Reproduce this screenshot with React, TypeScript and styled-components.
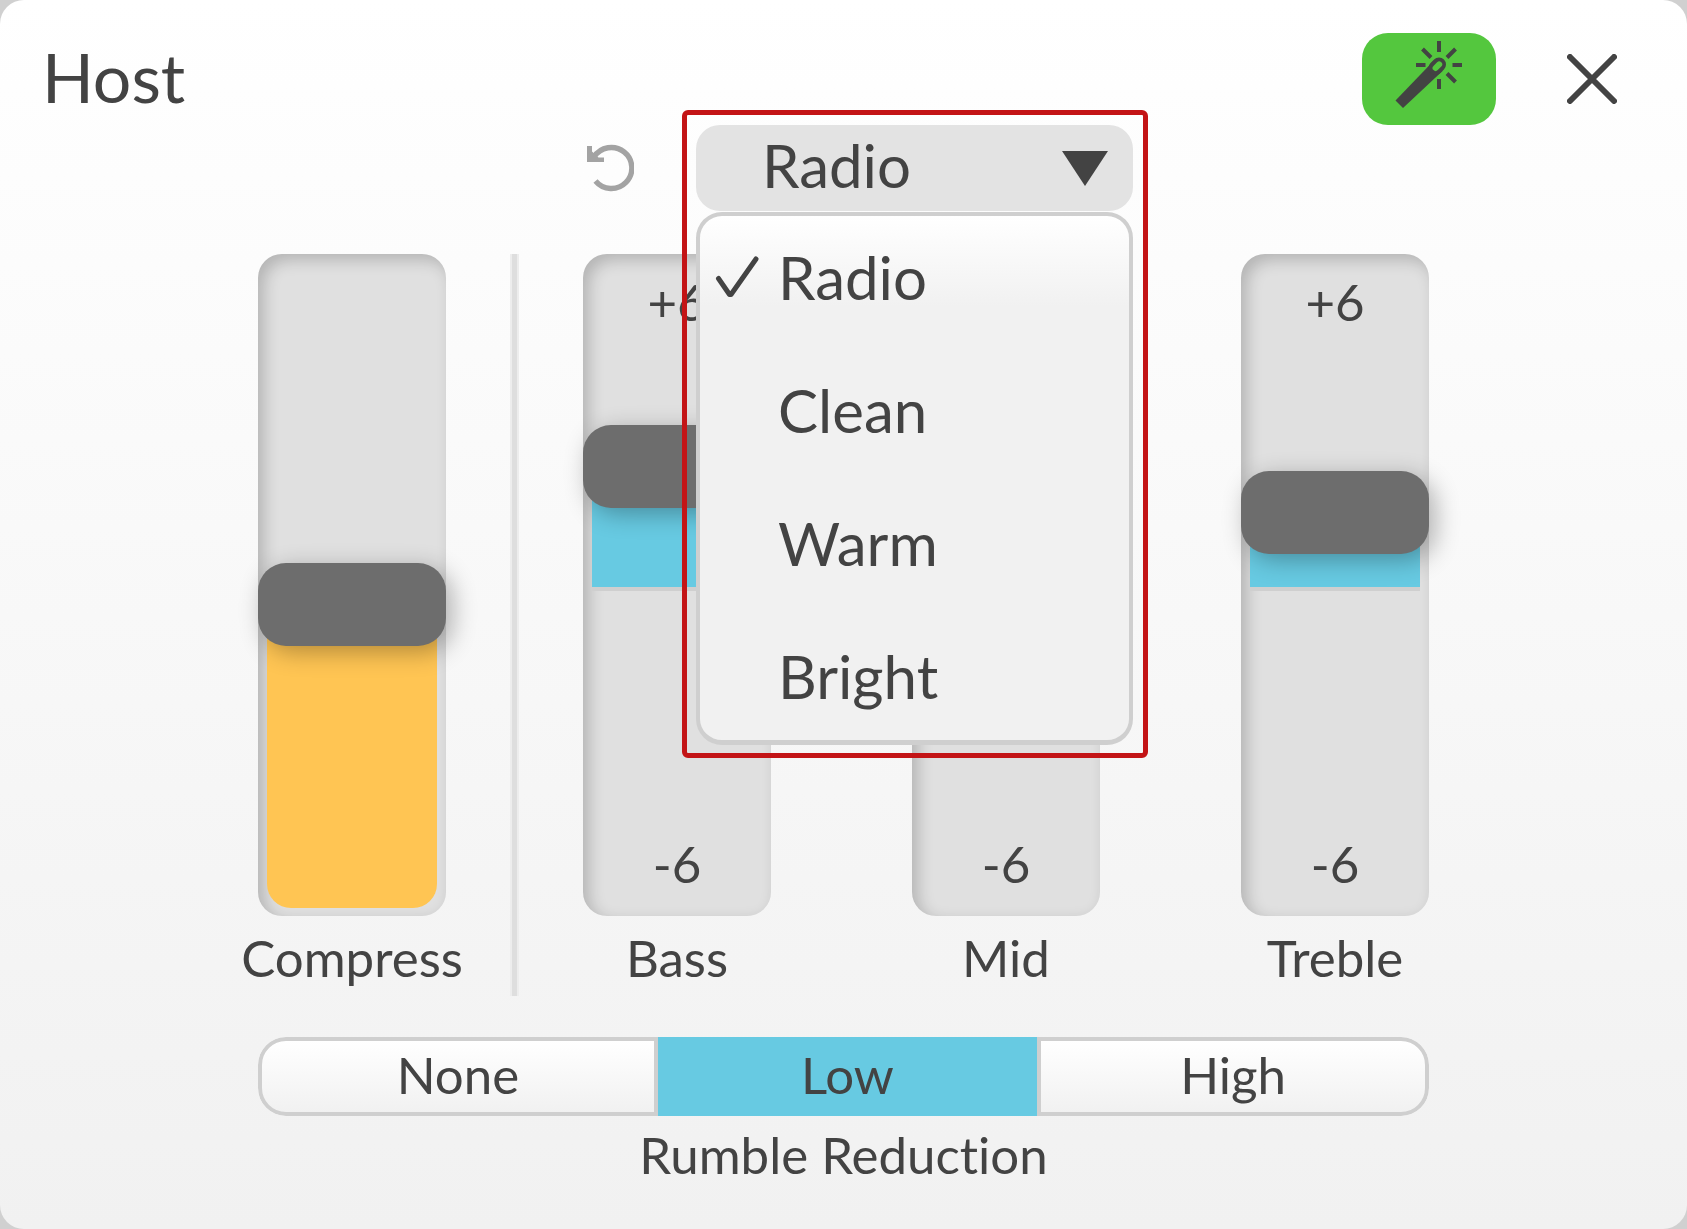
import { useState } from 'react';
import styled, { createGlobalStyle } from 'styled-components';

const ink = '#434343';
const aqua = '#67cae2';
const amber = '#ffc553';
const line = '#cfcfcf';
const TRACK = 662;
const THUMB = 83;

const GlobalStyle = createGlobalStyle`
  *, *::before, *::after { box-sizing: border-box; }
  body {
    margin: 0;
    background: #d0d0d0;
    color: ${ink};
    font-family: Lato, 'Open Sans', 'Liberation Sans', sans-serif;
    font-variant-ligatures: none;
  }
  button, select, input { font: inherit; color: inherit; margin: 0; }
`;

const Panel = styled.main`
  display: flex;
  flex-direction: column;
  min-height: 100vh;
  border-radius: 24px;
  background: linear-gradient(#ffffff, #f1f1f1);
`;

const Header = styled.header`
  display: flex;
  align-items: flex-start;
  padding: 33px 70px 0 42px;
`;

const Title = styled.h1`
  flex: 1;
  margin: 0;
  font-size: 68px;
  line-height: 88px;
  font-weight: 400;
`;

const MagicButton = styled.button`
  width: 134px;
  height: 92px;
  padding: 0;
  border: 0;
  border-radius: 26px;
  background: #54c73e;
  cursor: pointer;

  svg { display: block; }
`;

const PlainButton = styled.button<{ $size: number }>`
  width: ${(p) => p.$size}px;
  height: ${(p) => p.$size}px;
  padding: 0;
  border: 0;
  background: none;
  cursor: pointer;

  svg { display: block; }
`;

const CloseButton = styled(PlainButton)`
  align-self: center;
  margin-left: 71px;
`;

const Body = styled.div`
  display: flex;
  flex-direction: column;
  padding: 0 258px;
`;

const PresetRow = styled.div`
  display: flex;
  align-items: center;
  gap: 62px;
  padding-left: 328px;
`;

const PresetAnchor = styled.div`
  position: relative;
  width: 437px;
  height: 86px;
`;

const Highlight = styled.div`
  position: absolute;
  z-index: 2;
  top: -15px;
  left: -14px;
  right: -15px;
  padding: 10px 10px 8px 9px;
  border: 5px solid #c31416;
  border-radius: 6px;
`;

const SelectBox = styled.label`
  display: grid;
  align-items: center;

  > * { grid-area: 1 / 1; }

  > svg {
    justify-self: end;
    margin-right: 25px;
    pointer-events: none;
  }
`;

const PresetSelect = styled.select`
  appearance: none;
  width: 100%;
  height: 86px;
  padding: 0 80px 6px 66px;
  border: 0;
  border-radius: 24px;
  background: #e3e3e3;
  font-size: 60px;
  cursor: pointer;
`;

const Menu = styled.ul`
  display: flex;
  flex-direction: column;
  gap: 12px;
  margin: 1px 0 0;
  padding: 2px 0;
  list-style: none;
  border: 4px solid ${line};
  border-bottom-width: 5px;
  border-radius: 26px;
  background: linear-gradient(#ffffff, #f1f1f1 90px);
`;

const MenuItem = styled.button`
  display: flex;
  align-items: center;
  gap: 18px;
  width: 100%;
  height: 121px;
  padding: 0 14px 4px;
  border: 0;
  background: none;
  font-size: 60px;
  text-align: left;
  cursor: pointer;
`;

const CheckSlot = styled.span`
  display: flex;
  width: 46px;
`;

const Sliders = styled.section`
  display: flex;
  gap: 64px;
  margin-top: 43px;
`;

const Divider = styled.div`
  width: 9px;
  border: solid #ededed;
  border-width: 0 2px;
  background: #dedede;
`;

const Bands = styled.div`
  display: flex;
  flex: 1;
  justify-content: space-between;
`;

const Channel = styled.label`
  display: flex;
  flex-direction: column;
  align-items: center;
  width: 188px;
`;

const Track = styled.div`
  position: relative;
  display: grid;
  width: 100%;
  height: ${TRACK}px;
  border-radius: 24px;
  background: #e0e0e0;
  box-shadow: inset 6px 6px 16px rgba(0, 0, 0, 0.2);

  > * { grid-area: 1 / 1; }
`;

const Fill = styled.div<{ $color: string; $centered: boolean }>`
  position: absolute;
  left: 9px;
  right: 9px;
  bottom: ${(p) => (p.$centered ? '325px' : '8px')};
  border-bottom: ${(p) => (p.$centered ? `4px solid ${line}` : '0')};
  border-radius: ${(p) => (p.$centered ? '0' : '0 0 24px 24px')};
  background: ${(p) => p.$color};
`;

const Scale = styled.div`
  z-index: 1;
  display: flex;
  flex-direction: column;
  align-items: center;
  justify-content: space-between;
  padding: 18px 0 22px;
  font-size: 51px;
  line-height: 60px;
  pointer-events: none;
`;

const Range = styled.input`
  z-index: 1;
  appearance: none;
  writing-mode: vertical-lr;
  direction: rtl;
  width: 100%;
  height: 100%;
  background: none;
  cursor: pointer;

  &::-webkit-slider-runnable-track {
    width: 100%;
    height: 100%;
    background: none;
  }

  &::-webkit-slider-thumb {
    appearance: none;
    width: 188px;
    height: ${THUMB}px;
    border-radius: 28px;
    background: #6d6d6d;
    box-shadow: 6px 6px 24px rgba(0, 0, 0, 0.3);
  }
`;

const Caption = styled.span`
  padding-top: 3px;
  font-size: 51px;
  line-height: 77px;
  white-space: nowrap;
`;

const Rumble = styled.fieldset`
  min-width: 0;
  margin: 41px 0 0;
  padding: 0;
  border: 0;
  text-align: center;
`;

const Segments = styled.div`
  display: flex;
  height: 79px;
  border-radius: 28px;
  overflow: hidden;
`;

const Segment = styled.label<{ $grow: number; $on: boolean; $edge?: 'start' | 'end' }>`
  position: relative;
  flex: ${(p) => p.$grow} 1 0;
  padding-bottom: 4px;
  border: 4px solid ${(p) => (p.$on ? aqua : line)};
  border-radius: ${(p) =>
    p.$edge === 'start' ? '28px 0 0 28px' : p.$edge === 'end' ? '0 28px 28px 0' : '0'};
  background: ${(p) => (p.$on ? aqua : 'linear-gradient(#ffffff, #f1f1f1)')};
  font-size: 51px;
  line-height: 67px;
  cursor: pointer;

  input {
    position: absolute;
    inset: 0;
    opacity: 0;
    cursor: pointer;
  }
`;

const WandIcon = () => (
  <svg width="134" height="92" viewBox="0 0 134 92" fill="none" aria-hidden="true">
    <path d="M33.500 67.500 L71 28.500 L80.500 38 L41 75 Z" fill={ink} />
    <path d="M73.500 35 L77 31.500" stroke={ink} strokeWidth="14" strokeLinecap="round" />
    <path d="M73.600 35 L77.200 31.400" stroke="#54c73e" strokeWidth="6" strokeLinecap="round" />
    <path
      d="M77 8v11M77 46v10M54 32h9.500M90.500 32h9.500M60.500 16l8.500 8.500M93.500 16l-8.500 8.500M85 40.500l8.500 8.500"
      stroke={ink}
      strokeWidth="4"
    />
  </svg>
);

const CloseIcon = () => (
  <svg width="50" height="50" viewBox="0 0 50 50" aria-hidden="true">
    <path d="M3 3 L47 47 M47 3 L3 47" stroke={ink} strokeWidth="6" strokeLinecap="round" />
  </svg>
);

const ResetIcon = () => (
  <svg width="48" height="48" viewBox="0 0 48 48" fill="none" aria-hidden="true">
    <path d="M9.500 37 A20.500 20.500 0 1 0 8 13" stroke="#a3a3a3" strokeWidth="5.400" />
    <path d="M1 2 H6 V7.500 L12.500 13.500 H18 V18 H1 Z" fill="#a3a3a3" />
  </svg>
);

const ArrowIcon = () => (
  <svg width="46" height="35" viewBox="0 0 46 35" aria-hidden="true">
    <path d="M0 0 H46 L23 35 Z" fill={ink} />
  </svg>
);

const CheckIcon = () => (
  <svg width="46" height="42" viewBox="0 0 46 42" fill="none" aria-hidden="true">
    <path
      d="M4.500 22.500 L15.500 38.500 H17 L42 3"
      stroke={ink}
      strokeWidth="5"
      strokeLinecap="round"
      strokeLinejoin="round"
    />
  </svg>
);

type SliderProps = {
  name: string;
  initial: number;
  min: number;
  max: number;
  step: number;
  color: string;
  marks?: [string, string];
};

function Slider({ name, initial, min, max, step, color, marks }: SliderProps) {
  const [value, setValue] = useState(initial);
  const ratio = (value - min) / (max - min);
  const thumbCenter = (1 - ratio) * (TRACK - THUMB) + THUMB / 2;
  return (
    <Channel>
      <Track>
        <Fill $color={color} $centered={Boolean(marks)} style={{ top: thumbCenter }} />
        {marks && (
          <Scale>
            <span>{marks[0]}</span>
            <span>{marks[1]}</span>
          </Scale>
        )}
        <Range
          type="range"
          aria-label={name}
          min={min}
          max={max}
          step={step}
          value={value}
          onChange={(e) => setValue(Number(e.target.value))}
        />
      </Track>
      <Caption>{name}</Caption>
    </Channel>
  );
}

const presets = ['Radio', 'Clean', 'Warm', 'Bright'];
const levels = [
  { name: 'None', grow: 400, edge: 'start' as const },
  { name: 'Low', grow: 379, edge: undefined },
  { name: 'High', grow: 392, edge: 'end' as const },
];
const marks: [string, string] = ['+6', '-6'];

export default function App() {
  const [preset, setPreset] = useState('Radio');
  const [level, setLevel] = useState('Low');

  return (
    <>
      <GlobalStyle />
      <Panel>
        <Header>
          <Title>Host</Title>
          <MagicButton type="button" aria-label="Enhance">
            <WandIcon />
          </MagicButton>
          <CloseButton type="button" $size={50} aria-label="Close">
            <CloseIcon />
          </CloseButton>
        </Header>
        <Body>
          <PresetRow>
            <PlainButton type="button" $size={48} aria-label="Reset" onClick={() => setPreset('Radio')}>
              <ResetIcon />
            </PlainButton>
            <PresetAnchor>
              <Highlight>
                <SelectBox>
                  <PresetSelect
                    aria-label="Preset"
                    value={preset}
                    onChange={(e) => setPreset(e.target.value)}
                  >
                    {presets.map((p) => (
                      <option key={p}>{p}</option>
                    ))}
                  </PresetSelect>
                  <ArrowIcon />
                </SelectBox>
                <Menu>
                  {presets.map((p) => (
                    <li key={p}>
                      <MenuItem type="button" aria-pressed={p === preset} onClick={() => setPreset(p)}>
                        <CheckSlot>{p === preset && <CheckIcon />}</CheckSlot>
                        {p}
                      </MenuItem>
                    </li>
                  ))}
                </Menu>
              </Highlight>
            </PresetAnchor>
          </PresetRow>
          <Sliders>
            <Slider name="Compress" initial={46.7} min={0} max={100} step={0.1} color={amber} />
            <Divider />
            <Bands>
              <Slider name="Bass" initial={2.45} min={-6} max={6} step={0.05} color={aqua} marks={marks} />
              <Slider name="Mid" initial={2} min={-6} max={6} step={0.05} color={aqua} marks={marks} />
              <Slider name="Treble" initial={1.5} min={-6} max={6} step={0.05} color={aqua} marks={marks} />
            </Bands>
          </Sliders>
          <Rumble aria-labelledby="rumble-caption">
            <Segments>
              {levels.map((l) => (
                <Segment key={l.name} $grow={l.grow} $edge={l.edge} $on={l.name === level}>
                  <input
                    type="radio"
                    name="rumble"
                    checked={l.name === level}
                    onChange={() => setLevel(l.name)}
                  />
                  {l.name}
                </Segment>
              ))}
            </Segments>
            <Caption id="rumble-caption">Rumble Reduction</Caption>
          </Rumble>
        </Body>
      </Panel>
    </>
  );
}
